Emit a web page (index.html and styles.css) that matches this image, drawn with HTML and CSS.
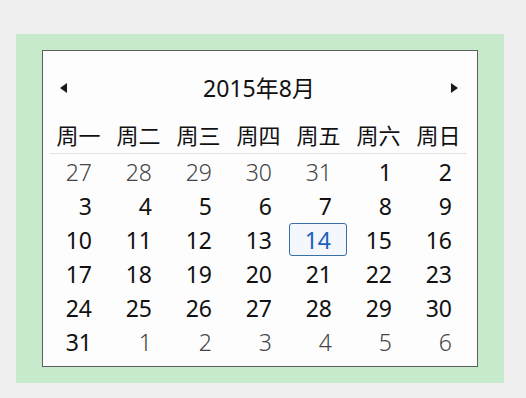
FILE: index.html
```html
<!DOCTYPE html>
<html lang="zh-CN">
<head>
    <meta charset="UTF-8">
    <title>日历</title>
    <link rel="stylesheet" href="styles.css">
</head>
<body>
    <div class="panel">
        <div class="calendar">
            <div class="cal-head">
                <span class="arrow arrow-left"></span>
                <span class="cal-title">2015年8月</span>
                <span class="arrow arrow-right"></span>
            </div>

            <div class="week-row">
                <span>周一</span><span>周二</span><span>周三</span><span>周四</span><span>周五</span><span>周六</span><span>周日</span>
            </div>

            <div class="days">
                <span class="other">27</span><span class="other">28</span><span class="other">29</span><span class="other">30</span><span class="other">31</span><span>1</span><span>2</span>
                <span>3</span><span>4</span><span>5</span><span>6</span><span>7</span><span>8</span><span>9</span>
                <span>10</span><span>11</span><span>12</span><span>13</span><span class="today">14</span><span>15</span><span>16</span>
                <span>17</span><span>18</span><span>19</span><span>20</span><span>21</span><span>22</span><span>23</span>
                <span>24</span><span>25</span><span>26</span><span>27</span><span>28</span><span>29</span><span>30</span>
                <span>31</span><span class="other">1</span><span class="other">2</span><span class="other">3</span><span class="other">4</span><span class="other">5</span><span class="other">6</span>
            </div>
        </div>
    </div>
</body>
</html>
```

FILE: styles.css
```css
* {
    box-sizing: border-box;
    margin: 0;
    padding: 0;
}

body {
    background-color: #efeff0;
    padding: 34px 0 0 16px;
    font-family: "Noto Sans", "Noto Sans CJK SC", sans-serif;
    color: #111;
}

.panel {
    width: 488px;
    height: 349px;
    background-color: #c7eacc;
    padding: 16px 26px;
}

.calendar {
    width: 436px;
    height: 317px;
    background: #fdfdfe;
    border: 1px solid #5d5d5d;
    padding: 17px 9px 0 5px;
}

.cal-head {
    height: 40px;
    display: flex;
    align-items: center;
    justify-content: space-between;
    padding: 0 10px 0 12px;
}

.cal-title {
    font-size: 23px;
    line-height: 40px;
}

.arrow {
    width: 0;
    height: 0;
    border-top: 5px solid transparent;
    border-bottom: 5px solid transparent;
}

.arrow-left {
    border-right: 7px solid #1a1a1a;
}

.arrow-right {
    border-left: 7px solid #1a1a1a;
}

.week-row {
    margin-top: 8px;
    height: 38px;
    display: grid;
    grid-template-columns: repeat(7, 60px);
    align-items: center;
    font-family: "Noto Sans CJK SC", sans-serif;
    font-size: 22px;
    text-align: center;
    border-bottom: 1px solid #e4e4e6;
    margin-left: 2px;
    margin-right: 1px;
    padding-bottom: 2px;
}

.week-row span {
    margin-left: -3px;
}

.days {
    margin-top: 1px;
    display: grid;
    grid-template-columns: repeat(7, 60px);
    grid-auto-rows: 34px;
    font-size: 23px;
}

.days span {
    display: flex;
    align-items: center;
    justify-content: flex-end;
    padding-right: 16px;
}

/* days of the previous / next month */
.days .other {
    color: #444;
    font-weight: 300;
}

.days .today {
    color: #1d5fbf;
    background: #f4f8fd;
    border: 1px solid #3a6ea8;
    border-radius: 3px;
    margin: 0 1px 1px 1px;
    padding-right: 15px;
}
```
